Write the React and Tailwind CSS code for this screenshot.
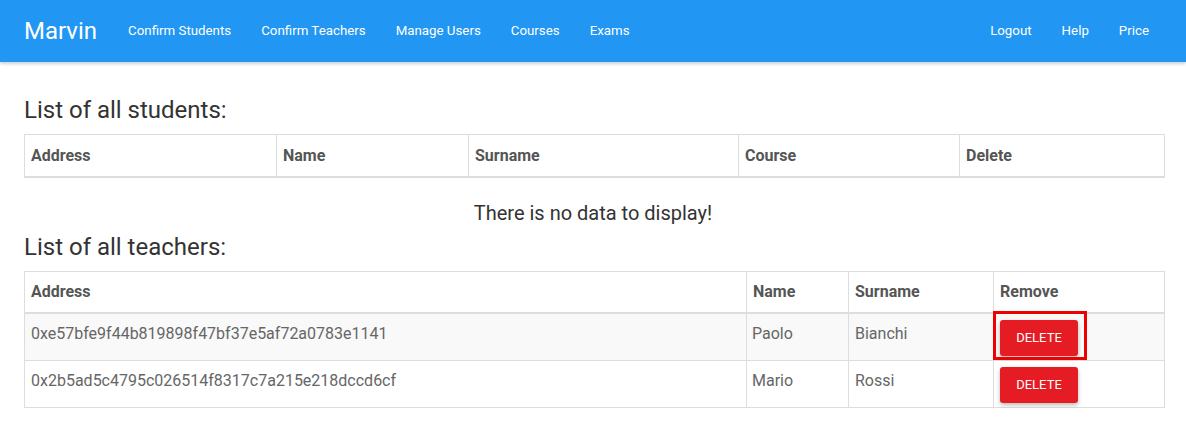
import React from 'react';

const teachers = [
    { address: "0xe57bfe9f44b819898f47bf37e5af72a0783e1141", name: "Paolo", surname: "Bianchi", highlight: true },
    { address: "0x2b5ad5c4795c026514f8317c7a215e218dccd6cf", name: "Mario", surname: "Rossi" },
];

function Navbar() {
    const left = ["Confirm Students", "Confirm Teachers", "Manage Users", "Courses", "Exams"];
    const right = ["Logout", "Help", "Price"];
    return (
        <nav className="h-[62px] bg-[#2196f3] text-white flex items-center justify-between pl-6 pr-[37px] shadow-[0_2px_3px_rgba(0,0,0,0.18)] relative">
            <div className="flex items-center">
                <a className="text-[24px] leading-none mr-[31px]">Marvin</a>
                <div className="flex items-center gap-[30px] text-[13.3px]">
                    {left.map((l) => <a key={l}>{l}</a>)}
                </div>
            </div>
            <div className="flex items-center gap-[30px] text-[13.3px]">
                {right.map((l) => <a key={l}>{l}</a>)}
            </div>
        </nav>
    );
}

function Th({ children, w }) {
    return (
        <th className={`${w} border border-[#ddd] border-b-2 px-[6px] pt-px h-[42px] text-left font-bold text-[16px] text-[#555]`}>
            {children}
        </th>
    );
}

export default function App() {
    return (
        <div className="min-h-screen bg-white font-['Roboto',sans-serif]">
            <Navbar />
            <div className="px-6">
                <h3 className="text-[24px] leading-[26px] text-[#333] mt-[35px] mb-[11px]">List of all students:</h3>
                <table className="w-full table-fixed border-collapse">
                    <thead>
                        <tr>
                            <Th w="w-[252px]">Address</Th>
                            <Th w="w-[192px]">Name</Th>
                            <Th w="w-[270px]">Surname</Th>
                            <Th w="w-[221px]">Course</Th>
                            <Th w="w-[205px]">Delete</Th>
                        </tr>
                    </thead>
                </table>
                <p className="text-center text-[20px] leading-[24px] text-[#333] mt-[23px]">There is no data to display!</p>
                <h3 className="text-[24px] leading-[26px] text-[#333] mt-[9px] mb-[11px]">List of all teachers:</h3>
                <table className="w-full table-fixed border-collapse">
                    <thead>
                        <tr>
                            <Th w="w-[722px]">Address</Th>
                            <Th w="w-[102px]">Name</Th>
                            <Th w="w-[145px]">Surname</Th>
                            <Th w="w-[171px]">Remove</Th>
                        </tr>
                    </thead>
                    <tbody>
                        {teachers.map((t, i) => (
                            <tr key={t.address} className={i % 2 === 0 ? "bg-[#f9f9f9]" : "bg-white"}>
                                <td className="border border-[#ddd] px-[6px] pt-[9px] align-top leading-[22px] text-[16px] text-[#666]">{t.address}</td>
                                <td className="border border-[#ddd] px-[5px] pt-[9px] align-top leading-[22px] text-[16px] text-[#666]">{t.name}</td>
                                <td className="border border-[#ddd] px-[6px] pt-[9px] align-top leading-[22px] text-[16px] text-[#666]">{t.surname}</td>
                                <td className="border border-[#ddd] px-[6px] pt-[6px] pb-[4px] align-top">
                                    <div className="relative inline-block align-middle">
                                        <button className="w-[78px] h-[36px] rounded-[3px] bg-[#e51c23] text-white text-[13px] uppercase shadow-[0_2px_4px_rgba(0,0,0,0.28)]">
                                            Delete
                                        </button>
                                        {t.highlight && (
                                            <span className="absolute -left-[7px] -top-[9px] w-[94px] h-[49px] border-[3px] border-[#ee0000] pointer-events-none" />
                                        )}
                                    </div>
                                </td>
                            </tr>
                        ))}
                    </tbody>
                </table>
            </div>
        </div>
    );
}
